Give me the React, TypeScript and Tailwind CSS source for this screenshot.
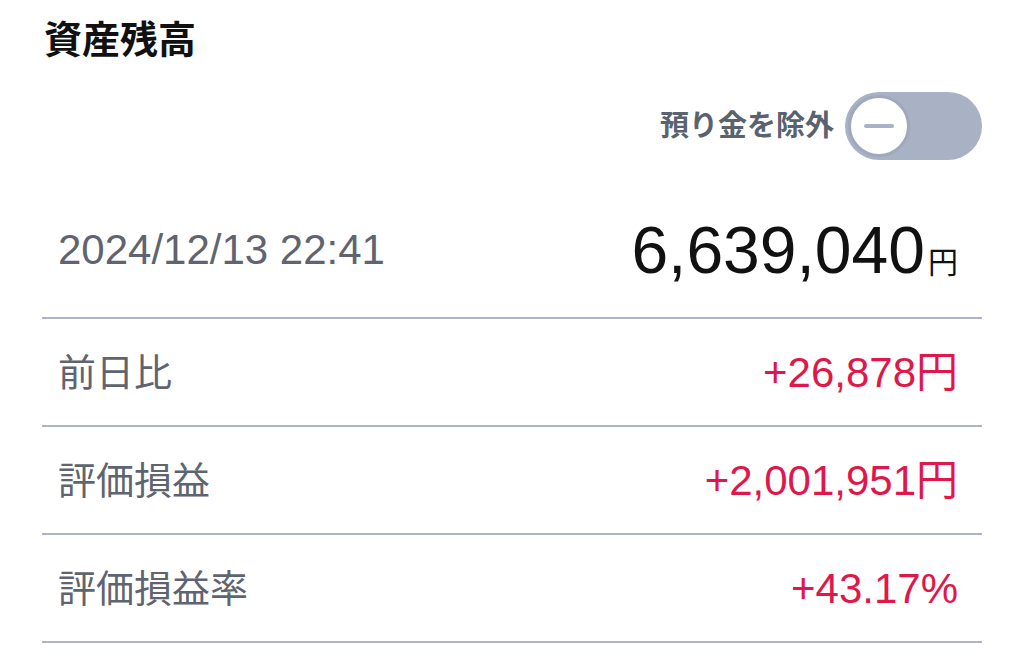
import React from "react";

const font = { fontFamily: '"Liberation Sans", "Noto Sans CJK JP", sans-serif' };

function Row({ label, value }: { label: string; value: string }) {
  return (
    <div className="flex h-[108px] items-center justify-between border-b-2 border-[#adb4c5] pl-[16px] pr-[24px] pt-[2px]">
      <span className="text-[38px] leading-none text-[#5f6470]">{label}</span>
      <span className="text-[42px] leading-none text-[#e0174a]">{value}</span>
    </div>
  );
}

export default function App() {
  return (
    <div className="h-[670px] w-[1024px] overflow-hidden bg-white px-[42px]" style={font}>
      <h1 className="ml-[2px] pt-[20px] text-[38px] font-bold leading-[40px] text-[#111]">資産残高</h1>
      <div className="mt-[32px] flex items-center justify-end gap-[11px]">
        <span className="text-[29px] font-semibold leading-none text-[#5a6270]">預り金を除外</span>
        <div className="flex h-[68px] w-[137px] items-center rounded-full bg-[#a9b2c4] pl-[3px]">
          <div className="flex h-[62px] w-[62px] items-center justify-center rounded-full border-[3px] border-[#a0a9bc] bg-white">
            <div className="h-[4px] w-[30px] rounded-full bg-[#a9b2c4]" />
          </div>
        </div>
      </div>
      <div className="flex h-[159px] items-center justify-between border-b-2 border-[#adb4c5] pl-[16px] pr-[24px] pt-[22px]">
        <span className="text-[42px] leading-none text-[#5f6470]">2024/12/13 22:41</span>
        <span className="flex items-baseline leading-none text-[#111]">
          <span className="text-[66px] leading-none">6,639,040</span>
          <span className="ml-[3px] text-[30px] leading-none">円</span>
        </span>
      </div>
      <Row label="前日比" value="+26,878円" />
      <Row label="評価損益" value="+2,001,951円" />
      <Row label="評価損益率" value="+43.17%" />
    </div>
  );
}
